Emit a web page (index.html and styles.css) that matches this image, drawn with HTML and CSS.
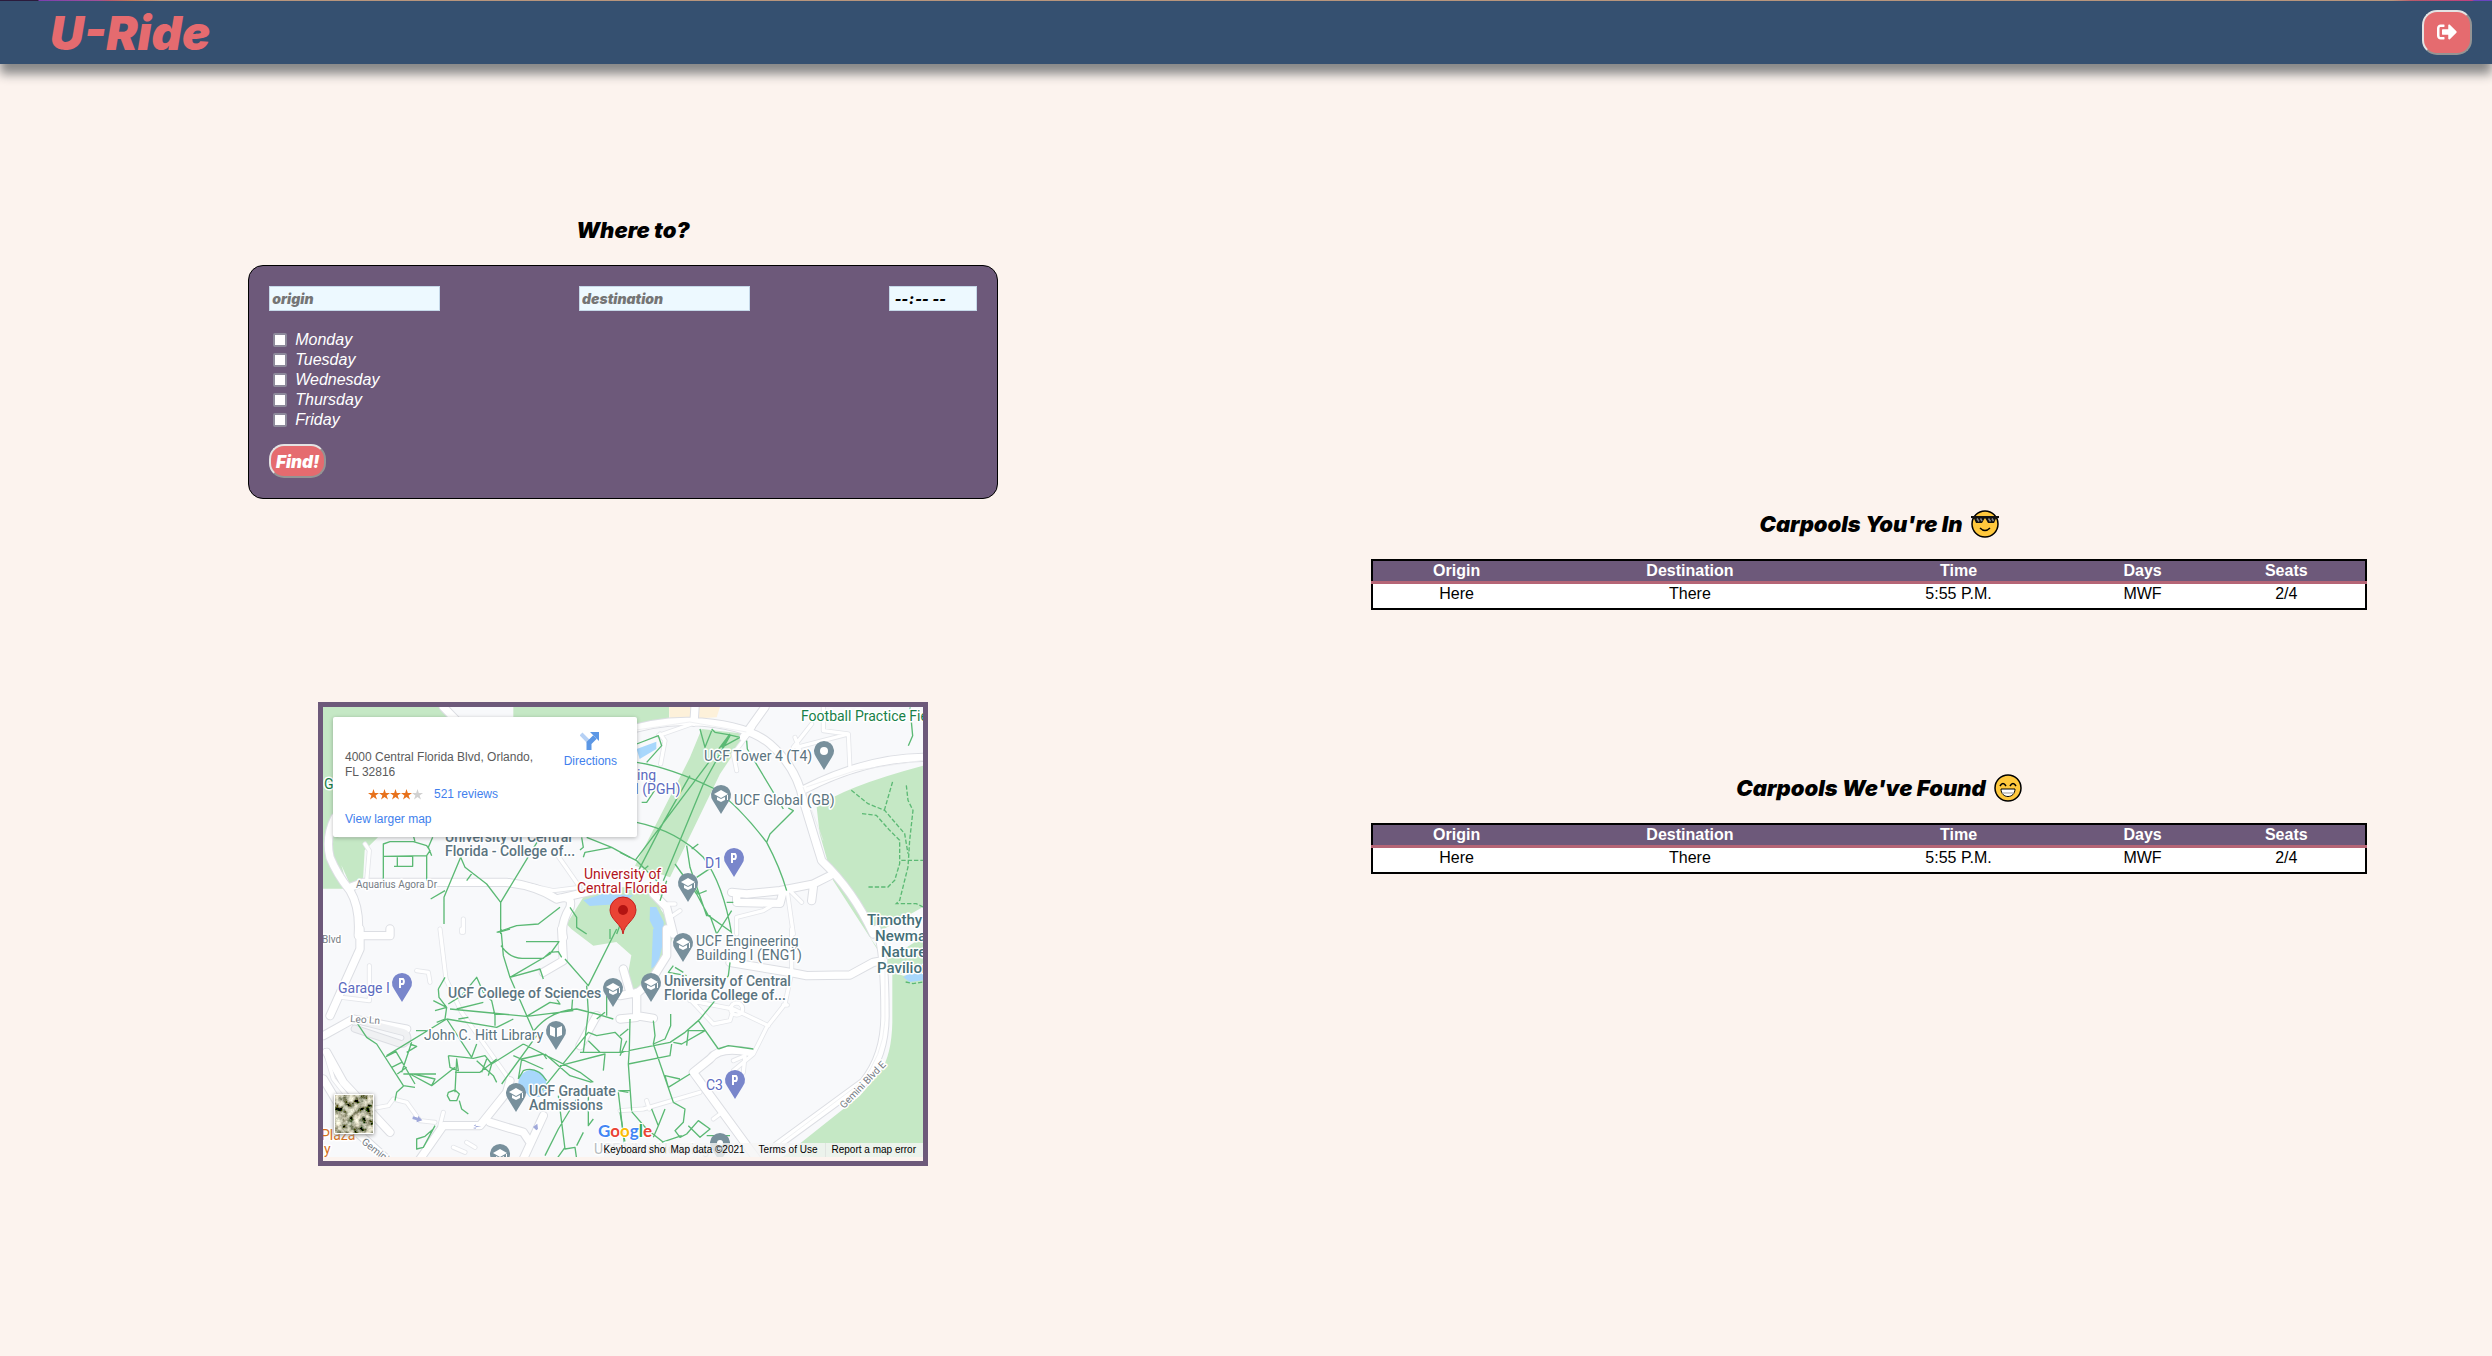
FILE: index.html
```html
<!DOCTYPE html>
<html lang="en">
<head>
<meta charset="utf-8">
<title>U-Ride</title>
<link rel="stylesheet" href="styles.css">
</head>
<body>
<header class="topbar">
  <h1 class="logo">U-Ride</h1>
  <button class="logout" type="button" aria-label="Log out">
    <svg width="20" height="20" viewBox="0 0 512 512" fill="#fff"><path d="M497 273L329 441c-15 15-41 4.500-41-17v-96H152c-13.300 0-24-10.700-24-24v-96c0-13.300 10.700-24 24-24h136V88c0-21.400 25.900-32 41-17l168 168c9.300 9.400 9.300 24.600 0 34zM192 436v-40c0-6.600-5.400-12-12-12H96c-17.700 0-32-14.300-32-32V160c0-17.700 14.300-32 32-32h84c6.600 0 12-5.400 12-12V76c0-6.600-5.400-12-12-12H96c-53 0-96 43-96 96v192c0 53 43 96 96 96h84c6.600 0 12-5.400 12-12z"/></svg>
  </button>
</header>
<main class="page">
  <section class="search">
    <h2 class="title">Where to?</h2>
    <form class="finder">
      <div class="fields">
        <input class="field" type="text" placeholder="origin" aria-label="origin">
        <input class="field" type="text" placeholder="destination" aria-label="destination">
        <input class="field time" type="time" aria-label="time">
      </div>
      <div class="days">
        <label><input type="checkbox">Monday</label>
        <label><input type="checkbox">Tuesday</label>
        <label><input type="checkbox">Wednesday</label>
        <label><input type="checkbox">Thursday</label>
        <label><input type="checkbox">Friday</label>
      </div>
      <button class="find" type="button">Find!</button>
    </form>
    <div class="map">
      <svg class="canvas" width="600" height="450" viewBox="0 0 600 450">
        <defs>
          <filter id="sat" x="0" y="0" width="1" height="1">
            <feTurbulence type="fractalNoise" baseFrequency=".16" numOctaves="4" seed="8"/>
            <feColorMatrix values="1.900 0 0 0 -.52 1.800 .1 0 0 -.52 1.600 .1 0 0 -.54 0 0 0 0 1"/>
          </filter>
          <path id="pin" d="M0 19L-8 6A10 10 0 1 1 8 6Z"/>
          <g id="school"><use href="#pin" fill="#78909c"/><path fill="#fff" d="M-7 -1L0 -5 7 -1 0 3ZM-4 2V5L0 7 4 5V2L0 4ZM6 0H7V5H6Z"/></g>
          <g id="park"><use href="#pin" fill="#7986cb"/><path fill="none" stroke="#fff" stroke-width="2" d="M-2 5V-4H1A2 3 0 0 1 1 1H-2"/></g>
          <g id="minor" fill="none" stroke-linecap="round" stroke-linejoin="round">
            <g transform="translate(-39 -39)"><path d="M165 450L178 470 170 560M460 675V715M740 480L810 580 730 590M730 590L640 570"/></g>
            <g transform="translate(891 -39)"><path d="M120 120L135 140 122 210M115 125L215 90M540 170L525 130M520 160L575 90M610 40V110L685 120 690 225M685 120L530 160M400 100L340 180 350 230M500 580L520 720M500 580L545 625M350 720L350 670 430 650 480 620M130 630H165M150 670L180 650"/></g>
            <g transform="translate(-39 666)"><path d="M390 0L408 150 455 250 600 455M320 125L355 130 360 160M178 110V215L95 205M45 365L70 450 110 500M180 540L235 530 250 510 290 520 330 575 375 580M455 0V10M400 550L390 590M430 655L465 670M470 640L495 655M940 120L955 170"/></g>
            <g transform="translate(891 666)"><path d="M515 0V130L495 225 440 295 400 375 340 425M0 545L70 540 240 490M80 515L88 540M200 200L280 285 330 275 340 240 445 290M210 215L340 240M490 228H502M350 240m-18 0a18 18 0 1 0 36 0a18 18 0 1 0 -36 0M280 570L300 555M340 395L375 380 370 430"/></g>
          </g>
          <g id="major" fill="none" stroke-linecap="round" stroke-linejoin="round">
            <g transform="translate(-39 -39)"><path d="M400 39L440 80M75 370Q45 430 60 490Q80 540 120 590Q150 640 145 720M120 580L160 565H590Q680 575 740 615L850 590M740 615Q790 600 780 640Q750 690 760 730"/></g>
            <g transform="translate(891 -39)"><path d="M-10 120Q100 80 210 82Q380 90 450 150Q530 220 550 320Q580 420 605 500Q700 590 760 720M435 39L370 130M555 285Q740 190 920 190M225 40L222 85M335 595L380 600 480 590 580 570 630 545M350 600V625L480 628 490 590M575 620L580 580M100 600L140 640 160 720"/></g>
            <g transform="translate(-39 666)"><path d="M150 0V60L60 260M145 20H240V0M40 320L130 270 290 300M755 0L760 95 700 130M50 370L100 460 240 610M40 450L130 600 230 690M600 455L590 490 510 590 400 590 330 690M540 580L640 610 660 640M700 560L640 690M860 260L810 350"/></g>
            <g transform="translate(891 666)"><path d="M140 0V80L90 160 55 190 0 200M50 190V260L100 268M50 265L0 270M10 120L30 190M330 100L510 130 560 140 690 138 760 100 790 95M770 0Q795 60 795 260Q795 380 730 460L470 650M390 370Q300 350 270 390L220 430 410 690"/></g>
          </g>
          <g id="loop" fill="none" stroke-linecap="round"><path d="M105 940L240 975A18 18 0 0 1 230 1010L95 965"/></g>
        </defs>
        <rect width="600" height="450" fill="#f8f9fb"/>
        <g transform="scale(.33333)">
          <g fill="#c5e8c5">
            <path d="M0 0H360L420 60H0ZM571 0H1038V40L571 120ZM0 0H60V330L40 420 75 545 0 545ZM40 391H165L125 430 120 520 80 530 40 440Z"/>
            <path d="M1481 301Q1560 240 1800 176V690L1690 760 1640 690 1530 520 1490 380ZM1800 796L1741 806 1708 796V946Q1706 1046 1671 1096L1611 1166 1380 1350H1800ZM1640 690L1708 800 1800 800V600Z"/>
            <path d="M1136 66L1271 81 1191 201 1041 511 936 476 1101 151Z"/>
            <path d="M731 651L781 571 891 540 985 545 1015 610 1055 670 1040 720 1021 780 970 840 925 850 915 800 925 745 880 705 811 716 745 666Z"/>
          </g>
          <path fill="#fdf1da" d="M1038 0H1191L1181 31 1040 40Z"/>
          <path fill="#a8d7fc" d="M781 580L840 560 930 565 900 590 800 597ZM981 600L1000 600 1022 645 1022 700 1005 690 980 640ZM990 666H1030L1005 770 985 785ZM941 126L1000 104 1000 126 950 156ZM586 1130A42 42 0 0 1 670 1130V1170H620ZM1741 811L1800 770V820L1760 825Z"/>
          <g stroke="#e4e6ea"><use href="#minor" stroke-width="15"/></g>
          <g stroke="#dcdee3"><use href="#major" stroke-width="28"/><use href="#loop" stroke-width="24"/></g>
          <use href="#minor" stroke="#fff" stroke-width="10"/>
          <use href="#major" stroke="#fff" stroke-width="22"/>
          <use href="#loop" stroke="#f0f1f3" stroke-width="18"/>
          <g fill="none" stroke="#e8eaed" stroke-width="2"><path d="M1440 240L1500 400M1450 240L1600 190 1800 160M1686 700V940Q1680 1050 1610 1130L1370 1310M900 75L1100 45 1270 75"/></g>
          <g fill="none" stroke="#5bb974" stroke-width="4" stroke-linejoin="round">
            <g transform="translate(-39 -39)"><path d="M220 560V450L240 443H310L350 455 360 470 350 485 220 487M350 485V560M262 490V515M308 485V517H252M315 443L310 425M355 460L368 430M365 485L355 460M452 490L410 590 402 610V690M362 615L405 590M452 490L465 520 530 570 572 625 690 430M488 535L470 560M572 625V720M560 715L620 695 685 690 750 640M780 640L800 670V700L830 720M815 430L820 460 810 468M820 490L825 475 905 460 830 430M905 460L960 490M950 640L920 720"/></g>
            <g transform="translate(891 -39)"><path d="M50 205Q150 220 285 285Q360 340 440 445Q480 520 500 590M50 385Q170 410 250 490Q310 570 335 720M330 120L45 500M275 105L285 115 325 122 360 130M240 105L255 160 275 110M305 160L330 125 250 270 130 560M305 160L360 130M210 245L130 385 45 550M380 140L382 165 490 345M440 445L450 420 520 350 505 342M200 455L210 520 260 665H270L290 720M235 450L215 465M165 510L230 600 265 665 335 715M205 550L235 600 260 590M290 720L335 650M230 550L275 520M0 475L50 500 120 570M85 515L45 550M120 620L140 560M50 150L115 125 125 155 80 205M65 325H80L110 280M870 40L878 125 865 155M320 625H340"/></g>
            <g transform="translate(-39 666)"><path d="M573 0L580 80 600 145 672 310M648 38H747L720 75 600 145 690 120 700 150M573 50Q600 90 640 88H700L720 70 745 68 755 85M920 0L835 170 765 90M650 262L720 220 750 225 740 210M565 10L600 0M385 180L405 145M385 180L387 205 410 235 370 215M375 245L410 235 405 270 380 280M420 240L650 262 790 245M415 225L455 200 500 145 520 190 545 215 555 260V290M440 240L520 220M410 270L560 295 610 270M410 270L230 380M410 270L485 385 500 345M445 270L475 265M672 305Q720 245 800 240L860 255 910 270M785 245L790 180M830 170L835 250 820 370M140 280L170 325 200 345 280 470 315 475M228 383L258 368 315 465M305 340L275 430M300 345L320 352 290 370M318 305H350M415 380L490 388 525 380 545 405 640 345M415 380L420 415 445 425 440 390 435 490M435 430L510 430 560 390M365 470L435 415M280 435H310L375 450 365 470 300 435 378 435M255 515L260 490 280 472M275 400L245 415M290 415L262 435M415 490L435 483 448 495 440 515 420 515 412 500ZM448 515L455 540 475 555M500 395L550 440 560 460M530 390L515 430M545 405L535 440M575 465L680 320M625 450L635 390 700 375 710 390M640 345L810 430 850 460M705 375L780 440 845 460M625 450L640 425Q680 410 710 455M610 380L700 420M690 490L835 310 860 320 915 310 935 330 930 370M810 370L940 370M750 410L885 375 880 425M835 335L870 370M375 590L340 655 320 660V630L345 622 370 600M745 500L765 660 795 655 800 690M765 655L740 690M835 500V590L850 570M705 680L745 600 800 510M820 610L800 650M925 490L945 660M925 485L955 490M900 0V30M890 200L890 260M860 270L885 250"/></g>
            <g transform="translate(891 666)"><path d="M285 215L240 270 195 310 150 340 0 370M25 405L150 380 155 345M30 270L28 360 25 405 35 545M100 275L105 320 100 345 160 520M0 320L25 300M0 380L20 335M235 275L295 360M235 275L200 305 255 305 185 345 160 340M205 305L200 350M295 360L325 350 400 360M210 435L145 475 135 440 180 450M152 255V290L135 330 100 345M0 485H30M35 548L80 600 130 640M160 520L195 540 190 580 165 605 180 625 200 615 235 575 270 600 240 625 205 590M95 540L115 590 135 540M115 590L100 625M0 550L15 640M165 115L190 130M330 100L325 140 290 190M160 110L145 130 200 140M185 620L125 640M260 620H330"/></g>
          </g>
          <g fill="none" stroke="#5bb974" stroke-width="4" stroke-dasharray="13 6"><path d="M1585 250L1635 290 1685 310 1745 380 1755 440M1684 310L1710 220M1750 235L1755 280 1770 310 1760 400 1755 480 1730 580 1720 590H1780L1800 600M1617 320L1660 325 1700 370 1730 400V470L1715 520 1695 540H1635M1735 460H1800M1748 825L1770 830 1800 825"/></g>
          <g fill="#9fa8da"><path d="M270 1228L285 1232V1226L298 1240 281 1246V1240L268 1236ZM475 1257H452L458 1252V1266L450 1263ZM640 1270L630 1260 643 1250 645 1266Z"/></g>
        </g>
        <g class="places">
          <g class="green"><text x="1" y="82">G</text><text x="478" y="14">Football Practice Field</text></g>
          <g class="slate">
            <text x="381" y="54">UCF Tower 4 (T4)</text>
            <text x="411" y="98">UCF Global (GB)</text>
            <text x="373" y="239">UCF Engineering</text><text x="373" y="253">Building I (ENG1)</text>
            <text x="101" y="333">John C. Hitt Library</text>
          </g>
          <g class="slate strong">
            <text x="122" y="135">University of Central</text><text x="122" y="149">Florida - College of...</text>
            <text x="341" y="279">University of Central</text><text x="341" y="293">Florida College of...</text>
            <text x="125" y="291">UCF College of Sciences</text>
            <text x="206" y="389">UCF Graduate</text><text x="206" y="403">Admissions</text>
          </g>
          <g class="teal strong s15"><text x="544" y="218">Timothy</text><text x="552" y="234">Newman</text><text x="558" y="250">Nature</text><text x="554" y="266">Pavilion</text></g>
          <g class="indigo"><text x="382" y="161">D1</text><text x="383" y="383">C3</text><text x="15" y="286">Garage I</text><text x="314" y="73">ing</text><text x="312" y="87">I (PGH)</text></g>
          <g class="road"><text x="33" y="181">Aquarius Agora Dr</text><text x="-1" y="236">Blvd</text><text transform="translate(27 315) rotate(4)">Leo Ln</text><text transform="translate(38 436) rotate(38)">Gemini Blvd</text><text transform="translate(521 402) rotate(-46)">Gemini Blvd E</text></g>
          <g class="orange"><text x="-2" y="433">Plaza</text><text x="1" y="447">y</text></g>
          <g class="red"><text x="261" y="172">University of</text><text x="254" y="186">Central Florida</text></g>
          <g class="faded"><text x="271" y="447">UCF Libra Housing</text></g>
        </g>
        <use href="#school" x="398" y="88"/><use href="#school" x="365" y="176"/><use href="#school" x="360" y="236"/>
        <use href="#school" x="328" y="276"/><use href="#school" x="290" y="281"/><use href="#school" x="193" y="386"/>
        <use href="#school" x="177" y="447"/><use href="#pin" x="397" y="436" fill="#78909c"/><circle cx="397" cy="436" r="3" fill="#fff"/>
        <use href="#pin" x="501" y="44" fill="#78909c"/><circle cx="501" cy="44" r="4" fill="#fff"/>
        <use href="#pin" x="233" y="324" fill="#78909c"/><path fill="#fff" d="M227 319L232 321V330L227 328ZM239 319L234 321V330L239 328Z"/>
        <use href="#park" x="411" y="151"/><use href="#park" x="412" y="373"/><use href="#park" x="79" y="276"/>
        <path fill="#ea4335" stroke="#c5221f" d="M300 227C299 217 287 213 287 203A13 13 0 0 1 313 203C313 213 301 217 300 227Z"/><circle cx="300" cy="203" r="5" fill="#b31412"/>
        <text class="google" x="275" y="430"><tspan fill="#4285f4">G</tspan><tspan fill="#ea4335">o</tspan><tspan fill="#fbbc04">o</tspan><tspan fill="#4285f4">g</tspan><tspan fill="#34a853">l</tspan><tspan fill="#ea4335">e</tspan></text>
        <rect class="thumb" x="11" y="387" width="40" height="40" rx="1" fill="#fff"/>
        <rect x="12" y="388" width="38" height="38" filter="url(#sat)"/>
      </svg>
      <div class="card">
        <div class="address">
          <p>4000 Central Florida Blvd, Orlando, FL 32816</p>
          <p class="rating">
            <svg width="55" height="11" viewBox="0 0 55 11"><defs><path id="star" d="M5.500 0L6.800 4H11L7.600 6.500 9 10.500 5.500 8 2 10.500 3.400 6.500 0 4H4.200Z"/></defs><g fill="#e7711b"><use href="#star"/><use href="#star" x="11"/><use href="#star" x="22"/><use href="#star" x="33"/></g><use href="#star" x="44" fill="#d1d1d1"/></svg>
            <a href="#">521 reviews</a>
          </p>
          <a href="#">View larger map</a>
        </div>
        <a class="directions" href="#">
          <svg width="20" height="18" viewBox="0 0 20 18"><path d="M1 2L9 10" stroke="#b6d1f5" stroke-width="4"/><path d="M9 18V11L15 5" fill="none" stroke="#5c97e5" stroke-width="5"/><path fill="#5c97e5" d="M10 0H19V9Z"/></svg>
          Directions
        </a>
      </div>
      <div class="legal"><a class="keys" href="#">Keyboard shortcuts</a><span>Map data ©2021</span><a href="#">Terms of Use</a><a href="#">Report a map error</a></div>
    </div>
  </section>
  <section class="carpools">
    <h2 class="title">Carpools You're In
      <svg class="emoji" width="28" height="28" viewBox="0 0 28 28"><circle cx="14" cy="14" r="13" fill="#ffc83d" stroke="#000" stroke-width="1.500"/><path d="M0 6H28V8L25 8.500 23 13H17L14.500 8.500H13.500L11 13H5L3 8.500 0 8Z" fill="#111"/><path d="M6 8.500L8 11.500M9.500 8.500L11 11M17.500 8.500L19.500 11.500M21 8.500L22.500 11" stroke="#888" stroke-width="1.500"/><path d="M9 18Q14 23 19 18" fill="none" stroke="#000" stroke-width="1.500"/></svg>
    </h2>
    <table>
      <colgroup><col class="c1"><col class="c2"><col class="c3"><col class="c4"><col class="c5"></colgroup>
      <thead><tr><th>Origin</th><th>Destination</th><th>Time</th><th>Days</th><th>Seats</th></tr></thead>
      <tbody><tr><td>Here</td><td>There</td><td>5:55 P.M.</td><td>MWF</td><td>2/4</td></tr></tbody>
    </table>
    <h2 class="title next">Carpools We've Found
      <svg class="emoji" width="28" height="28" viewBox="0 0 28 28"><circle cx="14" cy="14" r="13" fill="#ffc83d" stroke="#000" stroke-width="1.500"/><path d="M6 12Q9 7 12 12M16 12Q19 7 22 12" fill="none" stroke="#000" stroke-width="1.500"/><path d="M7 15H21C21 25 7 25 7 15Z" fill="#fff" stroke="#000"/><path d="M8 19H20" stroke="#999"/></svg>
    </h2>
    <table>
      <colgroup><col class="c1"><col class="c2"><col class="c3"><col class="c4"><col class="c5"></colgroup>
      <thead><tr><th>Origin</th><th>Destination</th><th>Time</th><th>Days</th><th>Seats</th></tr></thead>
      <tbody><tr><td>Here</td><td>There</td><td>5:55 P.M.</td><td>MWF</td><td>2/4</td></tr></tbody>
    </table>
  </section>
</main>
</body>
</html>
```
FILE: styles.css
```css
* { box-sizing: border-box; }
body { margin: 0; background: #fcf3ee; font-family: "Liberation Sans", Arial, sans-serif; font-size: 16px; color: #000; }
h1, h2, p { margin: 0; }
a { color: #427fed; text-decoration: none; }

.topbar { height: 64px; padding: 0 20px 0 50px; display: flex; align-items: center; justify-content: space-between; background: linear-gradient(90deg, #2b1b3c 0 38px, #7b3fb0 39px, #a0509a 98px, #b8566f 108px, #c0785a 130px, #b8957c 160px calc(100% - 100px), #b85a6a calc(100% - 80px), #c04080 calc(100% - 20px), #6a45c0 calc(100% - 18px)) top / 100% 1px no-repeat #355070; box-shadow: 0 10px 10px #888; }
.logo { font: italic 900 47px/60px Inter, sans-serif; color: #e56b6f; padding-top: 2px; }
.logout { width: 50px; height: 45px; padding: 0; display: flex; align-items: center; justify-content: center; background: #e56b6f; border: 2px solid; border-color: #e3e3e3 #949494 #949494 #e3e3e3; border-radius: 15px; }

.page { display: grid; grid-template-columns: 1fr 1fr; }
.search, .carpools { display: flex; flex-direction: column; align-items: center; }
.search { padding-top: 151px; }
.carpools { padding-top: 445px; }
.title { display: flex; align-items: center; gap: 8px; margin: 0 0 20px 20px; font: italic 900 22px/30px Inter, sans-serif; }
.title.next { margin-top: 163px; }
.emoji { flex: none; }

.finder { width: calc(60% + 2px); min-width: 560px; padding: 20px; background: #6d597a; border: 1px solid #000; border-radius: 15px; }
.fields { display: flex; justify-content: space-between; }
.field { width: 171px; height: 25px; padding: 1px 2px; border: 1px solid #c5d8e8; background: #edf9ff; font: italic 900 14px/20px Inter, sans-serif; color: #000; }
.field::placeholder { color: #757575; }
.time { width: 88px; padding-left: 4px; }
.time::-webkit-calendar-picker-indicator { display: none; }
.days { margin: 19px 0 14px; }
.days label { display: flex; align-items: center; gap: 8px; height: 20px; font-style: italic; color: #fff; }
.days input { appearance: none; width: 14px; height: 14px; margin: 0 0 0 4px; background: #fff; border: 2px solid #8d8a9b; border-radius: 2px; }
.find { display: block; height: 34px; width: 57px; padding: 2px 0 0; background: #e56b6f; color: #fff; border: 2px solid; border-color: #e3e3e3 #949494 #949494 #e3e3e3; border-radius: 15px; font: italic 900 17px/20px Inter, sans-serif; }

table { width: 80%; table-layout: fixed; border-collapse: collapse; border: 2px solid #000; background: #fff; text-align: center; }
thead { background: #6d597a; color: #fff; border-bottom: 3px solid #b56576; }
th, td { padding: 0; line-height: 20px; }
td { padding-bottom: 4px; }
.c1 { width: 17%; } .c2 { width: 30%; } .c3 { width: 24%; } .c4 { width: 13%; } .c5 { width: 16%; }

.map { position: relative; margin-top: 203px; width: 610px; height: 464px; border: 5px solid #6d597a; }
.canvas { display: block; }
.places { font: 14px Roboto, sans-serif; paint-order: stroke; stroke: #fff; stroke-width: 3px; stroke-linejoin: round; }
.strong { font-weight: 500; }
.s15 { font-size: 15px; }
.slate { fill: #5b7480; } .teal { fill: #456f78; } .green { fill: #188048; } .indigo { fill: #5c6bc0; } .orange { fill: #d5711c; } .red { fill: #b3141c; }
.road { font-size: 10px; fill: #757c84; }
.faded { fill: #b5bbc0; }
.google { font: 700 17px Lato, sans-serif; stroke: #fff; stroke-width: 2px; paint-order: stroke; }
.thumb { filter: drop-shadow(0 1px 2px #888); }
.card { position: absolute; left: 10px; top: 10px; width: 304px; height: 120px; padding: 33px 20px 0 12px; display: flex; justify-content: space-between; background: #fff; border-radius: 2px; box-shadow: 0 1px 4px #0004; font-size: 12px; line-height: 15px; color: #5b5b5b; }
.address { width: 200px; }
.rating { display: flex; align-items: center; gap: 11px; padding: 7px 0 10px 23px; }
.directions { display: flex; flex-direction: column; align-items: center; gap: 4px; margin-top: -18px; }
.legal { position: absolute; right: 0; bottom: 4px; height: 14px; display: flex; font-size: 10px; line-height: 14px; color: #000; white-space: nowrap; background: #f5f5f5cc; }
.legal a { color: #000; }
.legal > * { padding: 0 7px 0 6px; }
.legal > a + a { border-left: 1px solid #e0e4e0; }
.legal > span { padding: 0 8px 0 5px; }
.legal .keys { width: 62px; padding: 0; overflow: hidden; }
```
